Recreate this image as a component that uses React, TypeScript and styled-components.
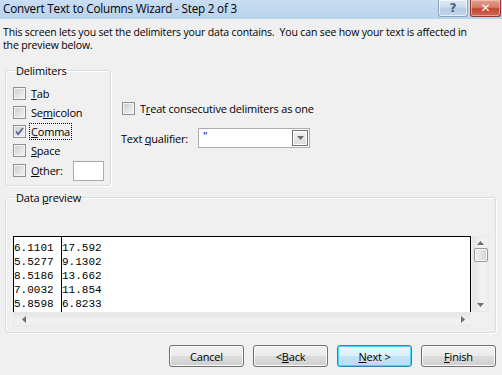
import React from 'react';
import styled, { createGlobalStyle } from 'styled-components';

const GlobalStyle = createGlobalStyle`
    html, body {
        margin: 0;
        padding: 0;
        background: #f0f0f0;
    }
`

const Window = styled.div`
    width: 502px;
    height: 375px;
    overflow: hidden;
    background: #f0f0f0;
    display: flex;
    flex-direction: column;
    font: normal 11px "Open Sans", "Noto Sans", sans-serif;
    letter-spacing: -0.2px;
    color: #000;
`

const TitleBar = styled.div`
    height: 19px;
    flex: none;
    display: flex;
    align-items: flex-start;
    background: linear-gradient(#c9ddf3, #bad2eb);
`

const Title = styled.div`
    flex: 1;
    padding-left: 3px;
    font-size: 11.7px;
    letter-spacing: -0.2px;
    line-height: 17px;
`

const CaptionButtons = styled.div`
    display: flex;
    gap: 2px;
    margin-right: 1px;
`

const CaptionButton = styled.div<{ $close?: boolean }>`
    width: ${p => (p.$close ? '31px' : '30px')};
    height: 17px;
    box-sizing: border-box;
    display: flex;
    align-items: center;
    justify-content: center;
    border: 1px solid ${p => (p.$close ? '#8c3b2c' : '#8ea5c0')};
    border-top: none;
    border-radius: 0 0 3px 3px;
    box-shadow: inset 0 0 0 1px ${p => (p.$close ? 'rgba(255,200,190,0.6)' : 'rgba(255,255,255,0.6)')};
    background: ${p =>
        p.$close
            ? 'linear-gradient(#e0a395 0%, #d67c66 45%, #c4462e 55%, #cf6b55 100%)'
            : 'linear-gradient(#dfe9f5 0%, #cbdbee 45%, #b5cbe5 55%, #c3d6ec 100%)'};
    color: ${p => (p.$close ? '#fff' : '#4a5f7c')};
    font: bold 12px "DejaVu Sans", sans-serif;
    letter-spacing: 0;
`

const Content = styled.div`
    flex: 1;
    display: flex;
    flex-direction: column;
    padding: 7px 6px 0 5px;
`

const Intro = styled.p`
    margin: 0 0 0 -2px;
    height: 26px;
    font-size: 10.5px;
    line-height: 13px;
    letter-spacing: -0.15px;
    white-space: nowrap;
`

const TopRow = styled.div`
    display: flex;
    margin-top: 12px;
`

const GroupBox = styled.fieldset`
    margin: 0;
    border: 1px solid #d5dfe5;
    border-radius: 3px;
    box-shadow: inset 1px 1px 0 #fff, 1px 1px 0 #fff;
    min-width: 0;
`

const Legend = styled.legend`
    padding: 0 1px;
    margin-left: 2px;
    line-height: 13px;
`

const DelimiterBox = styled(GroupBox)`
    width: 106px;
    box-sizing: border-box;
    padding: 7px 6px 4px 7px;
    display: flex;
    flex-direction: column;
`

const CheckRow = styled.label<{ $tall?: boolean }>`
    display: flex;
    align-items: center;
    gap: 5px;
    height: ${p => (p.$tall ? '21px' : '19px')};
    white-space: nowrap;
`

const Box = styled.span`
    width: 13px;
    height: 13px;
    box-sizing: border-box;
    flex: none;
    border: 1px solid #8e8f8f;
    box-shadow: inset 0 0 0 1px #f4f4f4;
    background: linear-gradient(135deg, #cbcbcb, #f7f7f7);
    display: flex;
    align-items: center;
    justify-content: center;
`

const FocusLabel = styled.span`
    outline: 1px dotted #000;
    outline-offset: 0;
    padding: 0 1px;
    margin-left: -1px;
`

const Key = styled.span`
    text-decoration: underline;
`

const OtherInput = styled.span`
    width: 31px;
    height: 20px;
    box-sizing: border-box;
    margin-left: auto;
    border: 1px solid #abadb3;
    border-top-color: #a2a4aa;
    background: #fff;
`

const RightArea = styled.div`
    display: flex;
    flex-direction: column;
    padding: 35px 0 0 11px;
`

const QualifierRow = styled.div`
    display: flex;
    align-items: center;
    margin-top: 10px;
    margin-left: -1px;
`

const QualifierLabel = styled.span`
    width: 77px;
`

const Select = styled.div`
    width: 112px;
    height: 20px;
    box-sizing: border-box;
    border: 1px solid #abadb3;
    background: #fff;
    display: flex;
    align-items: stretch;
    padding: 1px;
`

const SelectValue = styled.span`
    flex: 1;
    padding-left: 3px;
    line-height: 12px;
    font-size: 11px;
`

const DropButton = styled.span`
    width: 16px;
    box-sizing: border-box;
    border: 1px solid #707070;
    box-shadow: inset 0 0 0 1px #fff;
    background: linear-gradient(#f2f2f2, #dcdcdc);
    display: flex;
    align-items: center;
    justify-content: center;
`

const PreviewBox = styled(GroupBox)`
    margin-top: 5px;
    padding: 32px 7px 5px 7px;
`

const PreviewGrid = styled.div`
    display: grid;
    grid-template-columns: 458px 17px;
    grid-template-rows: 76px 15px;
    column-gap: 1px;
`

const PreviewTable = styled.div`
    background: #fff;
    border: 1px solid #000;
    border-bottom: none;
    display: grid;
    grid-template-columns: 48px 1fr;
    overflow: hidden;
`

const PreviewColumn = styled.div<{ $first?: boolean }>`
    padding-top: 4px;
    border-right: ${p => (p.$first ? '1px solid #000' : 'none')};
    font: 11px "Liberation Mono", "Courier New", monospace;
    letter-spacing: 0;
    line-height: 14px;
    white-space: pre;
`

const ScrollBar = styled.div<{ $vertical?: boolean }>`
    background: linear-gradient(${p => (p.$vertical ? '90deg' : '180deg')}, #e4e4e4, #f2f2f2 60%, #ededed);
    border: 1px solid #e9e9e9;
    box-sizing: border-box;
    display: flex;
    flex-direction: ${p => (p.$vertical ? 'column' : 'row')};
    align-items: center;
    justify-content: space-between;
    padding: ${p => (p.$vertical ? '4px 0 4px' : '0 5px 0 8px')};
`

const Thumb = styled.div`
    width: 14px;
    height: 14px;
    margin-top: 3px;
    box-sizing: border-box;
    border: 1px solid #979797;
    border-radius: 2px;
    background: linear-gradient(90deg, #f3f3f3, #e2e2e2 50%, #d4d4d4);
    box-shadow: inset 0 0 0 1px #fbfbfb;
`

const Spacer = styled.div`
    flex: 1;
`

const ButtonRow = styled.div`
    display: flex;
    justify-content: flex-end;
    gap: 9px;
    margin-top: 12px;
`

const PushButton = styled.div<{ $default?: boolean }>`
    width: 75px;
    height: 22px;
    box-sizing: border-box;
    display: flex;
    align-items: center;
    justify-content: center;
    border: 1px solid ${p => (p.$default ? '#3c7fb1' : '#707070')};
    border-radius: 3px;
    box-shadow: inset 0 0 0 1px ${p => (p.$default ? '#48d7fb' : '#fbfbfb')};
    background: ${p =>
        p.$default
            ? 'linear-gradient(#eaf6fd 0%, #dcf0fc 50%, #c4e5f9 50%, #b8dcf3 100%)'
            : 'linear-gradient(#f2f2f2 0%, #ebebeb 50%, #dddddd 50%, #cfcfcf 100%)'};
`

const Arrow = ({ dir }: { dir: 'up' | 'down' | 'left' | 'right' }) => {
    const paths = {
        up: 'M0 4 L3.5 0 L7 4 Z',
        down: 'M0 0 L7 0 L3.5 4 Z',
        left: 'M4 0 L4 7 L0 3.5 Z',
        right: 'M0 0 L4 3.5 L0 7 Z',
    }
    const vertical = dir === 'up' || dir === 'down'
    return (
        <svg width={vertical ? 7 : 4} height={vertical ? 4 : 7} viewBox={vertical ? '0 0 7 4' : '0 0 4 7'}>
            <path d={paths[dir]} fill="#6d6d6d" />
        </svg>
    )
}

const CheckBox = ({ checked }: { checked?: boolean }) => (
    <Box>
        {checked && (
            <svg width="9" height="9" viewBox="0 0 9 9">
                <path d="M1 4.5 L3.2 7.2 L8 1" fill="none" stroke="#4a5c8f" strokeWidth="1.6" />
            </svg>
        )}
    </Box>
)

const rows = [
    ['6.1101', '17.592'],
    ['5.5277', '9.1302'],
    ['8.5186', '13.662'],
    ['7.0032', '11.854'],
    ['5.8598', '6.8233'],
]

const App = () => {
    return (
        <Window>
            <GlobalStyle />
            <TitleBar>
                <Title>Convert Text to Columns Wizard - Step 2 of 3</Title>
                <CaptionButtons>
                    <CaptionButton>?</CaptionButton>
                    <CaptionButton $close>✕</CaptionButton>
                </CaptionButtons>
            </TitleBar>
            <Content>
                <Intro>
                    This screen lets you set the delimiters your data contains.&nbsp; You can see how your text is affected in
                    <br />
                    the preview below.
                </Intro>
                <TopRow>
                    <DelimiterBox>
                        <Legend>Delimiters</Legend>
                        <CheckRow>
                            <CheckBox />
                            <span><Key>T</Key>ab</span>
                        </CheckRow>
                        <CheckRow>
                            <CheckBox />
                            <span>Se<Key>m</Key>icolon</span>
                        </CheckRow>
                        <CheckRow>
                            <CheckBox checked />
                            <FocusLabel><Key>C</Key>omma</FocusLabel>
                        </CheckRow>
                        <CheckRow>
                            <CheckBox />
                            <span><Key>S</Key>pace</span>
                        </CheckRow>
                        <CheckRow $tall>
                            <CheckBox />
                            <span><Key>O</Key>ther:</span>
                            <OtherInput />
                        </CheckRow>
                    </DelimiterBox>
                    <RightArea>
                        <CheckRow>
                            <CheckBox />
                            <span>T<Key>r</Key>eat consecutive delimiters as one</span>
                        </CheckRow>
                        <QualifierRow>
                            <QualifierLabel>Text <Key>q</Key>ualifier:</QualifierLabel>
                            <Select>
                                <SelectValue>"</SelectValue>
                                <DropButton><Arrow dir="down" /></DropButton>
                            </Select>
                        </QualifierRow>
                    </RightArea>
                </TopRow>
                <PreviewBox>
                    <Legend>Data <Key>p</Key>review</Legend>
                    <PreviewGrid>
                        <PreviewTable>
                            <PreviewColumn $first>{rows.map(r => r[0]).join('\n')}</PreviewColumn>
                            <PreviewColumn>{rows.map(r => r[1]).join('\n')}</PreviewColumn>
                        </PreviewTable>
                        <ScrollBar $vertical>
                            <Arrow dir="up" />
                            <Thumb />
                            <Spacer />
                            <Arrow dir="down" />
                        </ScrollBar>
                        <ScrollBar>
                            <Arrow dir="left" />
                            <Arrow dir="right" />
                        </ScrollBar>
                    </PreviewGrid>
                </PreviewBox>
                <ButtonRow>
                    <PushButton>Cancel</PushButton>
                    <PushButton>&lt; <Key>B</Key>ack</PushButton>
                    <PushButton $default><Key>N</Key>ext &gt;</PushButton>
                    <PushButton><Key>F</Key>inish</PushButton>
                </ButtonRow>
            </Content>
        </Window>
    )
}

export default App
